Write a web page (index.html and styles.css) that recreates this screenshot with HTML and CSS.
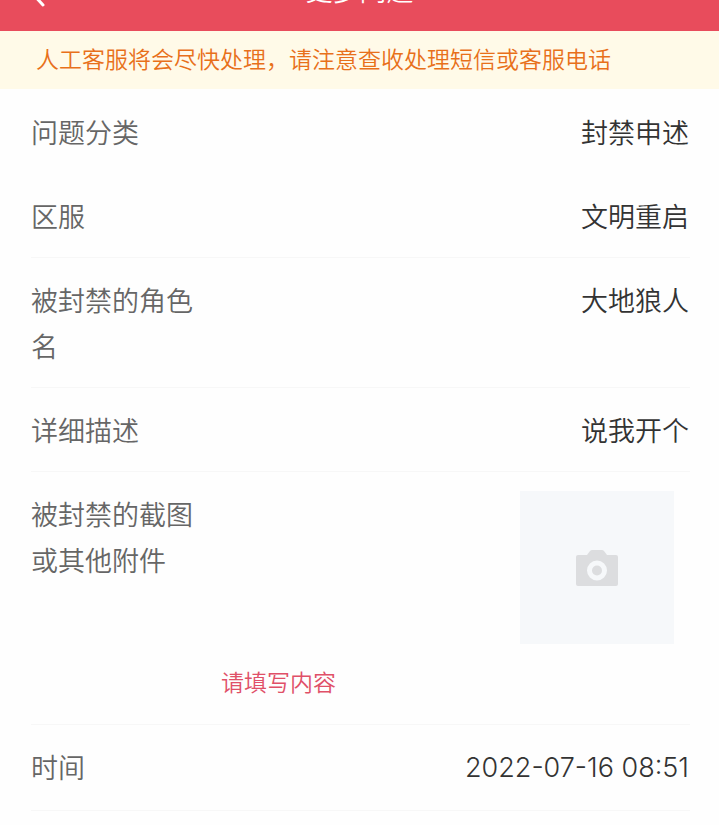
FILE: index.html
```
<!DOCTYPE html>
<html lang="zh-CN">
<head>
  <meta charset="UTF-8">
  <title>更多问题</title>
  <meta name="viewport" content="width=device-width, initial-scale=1" />
  <link rel="stylesheet" href="styles.css">
</head>
<body>

  <header class="navbar">
    <button type="button" class="back" aria-label="返回">
      <svg viewBox="0 0 18 30" width="18" height="30">
        <path d="M15 2 L3 15 L15 28" />
      </svg>
    </button>
    <h1 class="title">更多问题</h1>
  </header>

  <p class="notice">人工客服将会尽快处理，请注意查收处理短信或客服电话</p>

  <main class="form">
    <div class="row no-line">
      <div class="label">问题分类</div>
      <div class="value">封禁申述</div>
    </div>

    <div class="row">
      <div class="label">区服</div>
      <div class="value">文明重启</div>
    </div>

    <div class="row">
      <div class="label">被封禁的角色名</div>
      <div class="value">大地狼人</div>
    </div>

    <div class="row">
      <div class="label">详细描述</div>
      <div class="value">说我开个</div>
    </div>

    <div class="row">
      <div class="label">被封禁的截图或其他附件</div>
      <div class="value">
        <button type="button" class="upload" aria-label="上传截图">
          <svg viewBox="0 0 42 36" width="42" height="36">
            <path fill-rule="evenodd" d="M2 5 H11 L14 1 Q15 0 16 0 H26 Q27 0 28 1 L31 5 H40 Q42 5 42 7 V34 Q42 36 40 36 H2 Q0 36 0 34 V7 Q0 5 2 5 Z M21 10.500 A10 10 0 1 0 21 30.500 A10 10 0 1 0 21 10.500 Z" />
            <circle cx="21" cy="20.500" r="5" />
          </svg>
        </button>
        <p class="error">请填写内容</p>
      </div>
    </div>

    <div class="row">
      <div class="label">时间</div>
      <div class="value date">2022-07-16 08:51</div>
    </div>
  </main>

</body>
</html>
```
FILE: styles.css
```
*, *:before, *:after {
  box-sizing: border-box;
}
body {
  margin: 0;
  background-color: #fefefe;
  font-family: "Noto Sans CJK SC", sans-serif;
  font-size: 27px;
  font-weight: 350;
  line-height: 46px;
  color: #333;
}

.navbar {
  display: flex;
  align-items: flex-end;
  height: 31px;
  padding: 0 28px;
  overflow: hidden;
  background-color: #e84c5c;
  color: #fff;
}
.back {
  display: flex;
  align-items: center;
  flex: none;
  width: 28px;
  height: 78px;
  padding: 0;
  border: 0;
  background: none;
  cursor: pointer;
}
.back path {
  fill: none;
  stroke: #fff;
  stroke-width: 3;
  stroke-linecap: round;
  stroke-linejoin: round;
}
.title {
  flex: 1;
  margin: 0;
  padding-right: 28px;
  font-size: 27px;
  font-weight: 350;
  line-height: 82px;
  text-align: center;
}

.notice {
  margin: 0;
  padding: 4px 36px 8px;
  background-color: #fffae8;
  color: #e8701a;
  font-size: 23px;
}

.form {
  padding: 1px 29px 0 31px;
}
.row {
  display: flex;
  padding: 19px 1px 18px 0;
  border-bottom: 1px solid #f7f7f7;
}
.no-line {
  border-bottom-color: transparent;
}
.label {
  flex: none;
  width: 190px;
  padding-right: 24px;
  color: #666;
}
.value {
  flex: 1;
  text-align: right;
}
.date {
  font-family: Inter, sans-serif;
  line-height: 48px;
}

.upload {
  display: flex;
  align-items: center;
  justify-content: center;
  width: 154px;
  height: 153px;
  margin: 0 15px 0 auto;
  padding: 0;
  border: 0;
  background-color: #f6f8fa;
  cursor: pointer;
}
.upload svg {
  fill: #dcdddf;
}
.error {
  margin: 14px 0 0;
  padding-bottom: 2px;
  color: #e05068;
  font-size: 23px;
  text-align: left;
}
```
